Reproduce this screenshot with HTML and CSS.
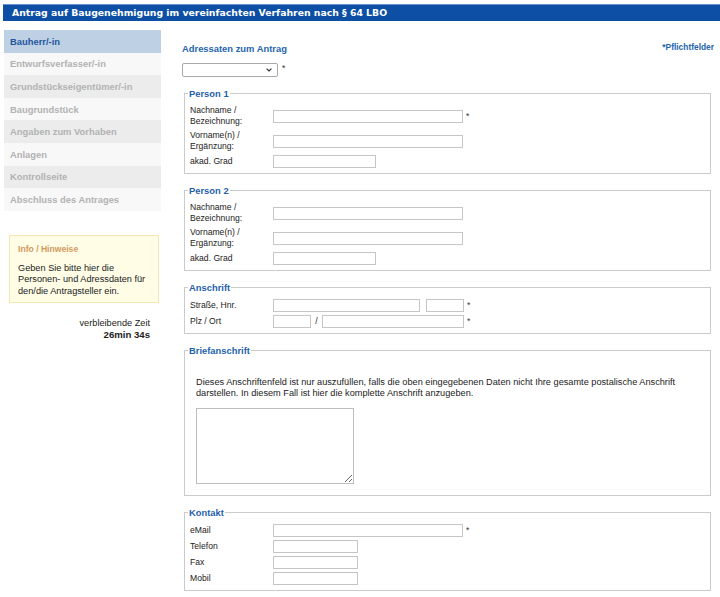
FILE: index.html
```html
<!DOCTYPE html>
<html lang="de">
<head>
<meta charset="utf-8">
<title>Antrag auf Baugenehmigung</title>
<link rel="stylesheet" href="styles.css">
</head>
<body>
<div class="titlebar">Antrag auf Baugenehmigung im vereinfachten Verfahren nach § 64 LBO</div>
<div class="layout">
  <aside class="sidebar">
    <nav class="steps">
      <div class="step active">Bauherr/-in</div>
      <div class="step">Entwurfsverfasser/-in</div>
      <div class="step alt">Grundstückseigentümer/-in</div>
      <div class="step">Baugrundstück</div>
      <div class="step alt">Angaben zum Vorhaben</div>
      <div class="step">Anlagen</div>
      <div class="step alt">Kontrollseite</div>
      <div class="step">Abschluss des Antrages</div>
    </nav>
    <div class="info">
      <div class="info-title">Info / Hinweise</div>
      <p class="info-text">Geben Sie bitte hier die Personen- und Adressdaten für den/die Antragsteller ein.</p>
    </div>
    <div class="timer">
      <div>verbleibende Zeit</div>
      <div class="timer-value">26min 34s</div>
    </div>
  </aside>

  <main class="content">
    <div class="content-head">
      <h1 class="heading">Adressaten zum Antrag</h1>
      <span class="required-note">*Pflichtfelder</span>
    </div>
    <div class="select-row">
      <span class="select-wrap">
        <select class="select"><option></option></select>
        <svg class="chevron" width="6" height="4" viewBox="0 0 6 4"><path d="M0.6 0.6 L3 3 L5.4 0.6" fill="none" stroke="#333" stroke-width="1.2"/></svg>
      </span>
      <span class="req">*</span>
    </div>

    <fieldset class="group">
      <legend>Person 1</legend>
      <div class="row"><label>Nachname /<br>Bezeichnung:</label><div class="field"><input class="in w-long" type="text"><span class="req">*</span></div></div>
      <div class="row"><label>Vorname(n) /<br>Ergänzung:</label><div class="field"><input class="in w-long" type="text"></div></div>
      <div class="row"><label>akad. Grad</label><div class="field"><input class="in w-short" type="text"></div></div>
    </fieldset>

    <fieldset class="group">
      <legend>Person 2</legend>
      <div class="row"><label>Nachname /<br>Bezeichnung:</label><div class="field"><input class="in w-long" type="text"></div></div>
      <div class="row"><label>Vorname(n) /<br>Ergänzung:</label><div class="field"><input class="in w-long" type="text"></div></div>
      <div class="row"><label>akad. Grad</label><div class="field"><input class="in w-short" type="text"></div></div>
    </fieldset>

    <fieldset class="group">
      <legend>Anschrift</legend>
      <div class="row"><label>Straße, Hnr.</label><div class="field"><input class="in w-street" type="text"><input class="in w-hnr gap6" type="text"><span class="req">*</span></div></div>
      <div class="row"><label>Plz / Ort</label><div class="field"><input class="in w-plz" type="text"><span class="slash">/</span><input class="in w-ort" type="text"><span class="req">*</span></div></div>
    </fieldset>

    <fieldset class="group">
      <legend>Briefanschrift</legend>
      <p class="note">Dieses Anschriftenfeld ist nur auszufüllen, falls die oben eingegebenen Daten nicht Ihre gesamte postalische Anschrift darstellen. In diesem Fall ist hier die komplette Anschrift anzugeben.</p>
      <textarea class="letter"></textarea>
    </fieldset>

    <fieldset class="group">
      <legend>Kontakt</legend>
      <div class="row"><label>eMail</label><div class="field"><input class="in w-long" type="text"><span class="req">*</span></div></div>
      <div class="row"><label>Telefon</label><div class="field"><input class="in w-phone" type="text"></div></div>
      <div class="row"><label>Fax</label><div class="field"><input class="in w-phone" type="text"></div></div>
      <div class="row"><label>Mobil</label><div class="field"><input class="in w-phone" type="text"></div></div>
    </fieldset>
  </main>
</div>
</body>
</html>
```

FILE: styles.css
```css
* { box-sizing: border-box; }

html, body {
  margin: 0;
  padding: 0;
  background: #ffffff;
}

body {
  font-family: "Liberation Sans", Arial, sans-serif;
  font-size: 8.6px;
  line-height: 11px;
  color: #222222;
  width: 720px;
  overflow: hidden;
}

.titlebar {
  margin: 4px 0 0 3px;
  height: 17px;
  background: #0c4fa5;
  border-top: 1px solid #6a92d2;
  color: #ffffff;
  font-family: "DejaVu Sans", Verdana, sans-serif;
  font-weight: bold;
  font-size: 9.3px;
  line-height: 15px;
  padding-left: 9px;
  white-space: nowrap;
}

.layout {
  display: flex;
  align-items: flex-start;
  margin-top: 9px;
}

/* Sidebar */
.sidebar {
  width: 157px;
  margin-left: 4px;
  flex: none;
}

.steps {
  display: flex;
  flex-direction: column;
}

.step {
  height: 22.6px;
  display: flex;
  align-items: center;
  padding-left: 6px;
  font-weight: bold;
  font-size: 9.4px;
  color: #b2b2b2;
  background: #f8f8f8;
  white-space: nowrap;
}

.step.alt { background: #ececec; }

.step.active {
  background: #bed0e3;
  color: #1f56a0;
}

.info {
  margin: 24px 2px 0 5px;
  background: #fffde6;
  border: 1px solid #f4e6b0;
  padding: 8px 8px 5px 8px;
}

.info-title {
  font-weight: bold;
  color: #d29a5e;
  line-height: 11px;
  margin-bottom: 8px;
}

.info-text {
  margin: 0;
  font-size: 9.2px;
  line-height: 11.5px;
  color: #222222;
}

.timer {
  margin-top: 14px;
  padding-right: 11px;
  text-align: right;
  font-size: 9.2px;
  line-height: 12px;
  color: #222222;
}

.timer-value {
  font-weight: bold;
  font-size: 9.6px;
}

/* Content */
.content {
  margin-left: 21px;
  width: 532px;
  flex: none;
}

.content-head {
  display: flex;
  justify-content: space-between;
  align-items: center;
  margin-top: 12.5px;
}

.heading {
  margin: 0;
  font-size: 9.4px;
  line-height: 11px;
  font-weight: bold;
  color: #2466ad;
}

.required-note {
  font-weight: bold;
  font-size: 8.4px;
  color: #2466ad;
  margin-top: -2px;
}

.select-row {
  display: flex;
  align-items: flex-start;
  margin-top: 9.5px;
}

.select-wrap {
  position: relative;
  display: block;
  width: 96px;
  height: 14px;
}

.select {
  -webkit-appearance: none;
  appearance: none;
  display: block;
  width: 96px;
  height: 14px;
  margin: 0;
  padding: 0;
  border: 1px solid #a9a9a9;
  border-radius: 2px;
  background: #ffffff;
}

.chevron {
  position: absolute;
  left: 84px;
  top: 5px;
}

.req {
  margin-left: 3px;
  color: #333333;
  line-height: 9px;
}

.select-row .req {
  margin-left: 4px;
  margin-top: 1px;
}

/* Fieldsets */
.group {
  margin: 11px 3px 0 2px;
  padding: 4.5px 5px 3px 5px;
  border: 1px solid #cbcbcb;
  min-width: 0;
}

.group + .group { margin-top: 11.5px; }

.group legend {
  padding: 0 1px;
  margin-left: -2px;
  font-weight: bold;
  font-size: 9.4px;
  line-height: 11px;
  color: #1f5fab;
}

.row {
  display: flex;
  align-items: center;
  padding: 1.5px 0;
}

.row label {
  width: 83px;
  flex: none;
  line-height: 11px;
}

.field {
  display: flex;
  align-items: center;
}

.in {
  height: 13px;
  margin: 0;
  padding: 0 2px;
  border: 1px solid #c5c5c5;
  background: #ffffff;
  font: inherit;
}

.w-long { width: 190px; }
.w-short { width: 103px; }
.w-street { width: 147px; }
.w-hnr { width: 38px; }
.w-plz { width: 38px; }
.w-ort { width: 142px; }
.w-phone { width: 85px; }
.gap6 { margin-left: 6px; }

.slash {
  width: 11px;
  text-align: center;
}

.note {
  margin: 16px 6px 0 6px;
  font-size: 9.2px;
  line-height: 11px;
}

.letter {
  display: block;
  width: 158px;
  height: 76px;
  margin: 9px 0 8px 6px;
  border: 1px solid #bdbdbd;
  padding: 2px;
  font: inherit;
}
```
